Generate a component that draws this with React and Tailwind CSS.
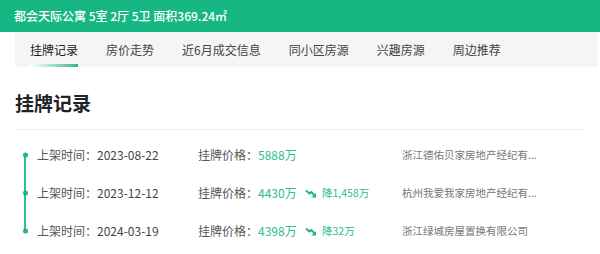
const font = { fontFamily: '"Noto Sans CJK SC", "Noto Sans", sans-serif' };

const tabs = ['挂牌记录', '房价走势', '近6月成交信息', '同小区房源', '兴趣房源', '周边推荐'];

const records = [
  { date: '2023-08-22', price: '5888万', drop: null, agency: '浙江德佑贝家房地产经纪有...' },
  { date: '2023-12-12', price: '4430万', drop: '降1,458万', agency: '杭州我爱我家房地产经纪有...' },
  { date: '2024-03-19', price: '4398万', drop: '降32万', agency: '浙江绿城房屋置换有限公司' },
];

function DownIcon() {
  return (
    <svg width="12" height="9" viewBox="0 0 12 9" className="shrink-0">
      <polyline points="1,1.5 4.5,4.5 6.5,3 9.5,6.5" fill="none" stroke="#1db583" strokeWidth="2" />
      <polygon points="11,4 11,8.5 6.5,8.5" fill="#1db583" />
    </svg>
  );
}

export default function App() {
  return (
    <div className="h-[254px] w-[600px] overflow-hidden bg-white" style={font}>
      <div className="flex h-8 items-center bg-[#17b784] pl-[14px] text-[12px] font-medium text-white">
        都会天际公寓 5室 2厅 5卫 面积369.24㎡
      </div>

      <div className="ml-[15px] mr-[2px] flex h-[35px] items-stretch bg-[#f5f5f5] pl-[15px]">
        {tabs.map((t, i) => (
          <div
            key={t}
            className={
              'relative mr-[28px] flex items-center text-[12px] ' +
              (i === 0 ? 'text-[#222]' : 'text-[#444]')
            }
          >
            {t}
            {i === 0 ? (
              <span className="absolute bottom-0 left-0 h-[3px] w-full bg-gradient-to-r from-white to-[#17b784]" />
            ) : null}
          </div>
        ))}
      </div>

      <div className="mx-[15px]">
        <h2 className="flex h-[63px] items-center border-b border-[#eeeeee] pt-[10px] text-[19px] font-bold text-[#222]">
          挂牌记录
        </h2>

        <div className="relative mt-[6px] pl-[22px]">
          <span className="absolute left-[9px] top-[19px] h-[76px] w-[2px] bg-[#2cc08f]" />
          {records.map((r) => (
            <div key={r.date} className="relative flex h-[38px] items-center text-[12px] text-[#555]">
              <span className="absolute -left-[14px] top-1/2 h-[5px] w-[5px] -translate-y-1/2 rounded-full bg-[#17b784]" />
              <div className="w-[161px]">
                上架时间：<span className="text-[#444]">{r.date}</span>
              </div>
              <div className="w-[107px]">
                挂牌价格：<span className="text-[#2cbd8c]">{r.price}</span>
              </div>
              <div className="flex w-[97px] items-center gap-[5px] text-[10.5px] text-[#2cbd8c]">
                {r.drop ? (
                  <>
                    <DownIcon />
                    <span>{r.drop}</span>
                  </>
                ) : null}
              </div>
              <div className="whitespace-nowrap text-[10.5px] text-[#777]">{r.agency}</div>
            </div>
          ))}
        </div>
      </div>
    </div>
  );
}
